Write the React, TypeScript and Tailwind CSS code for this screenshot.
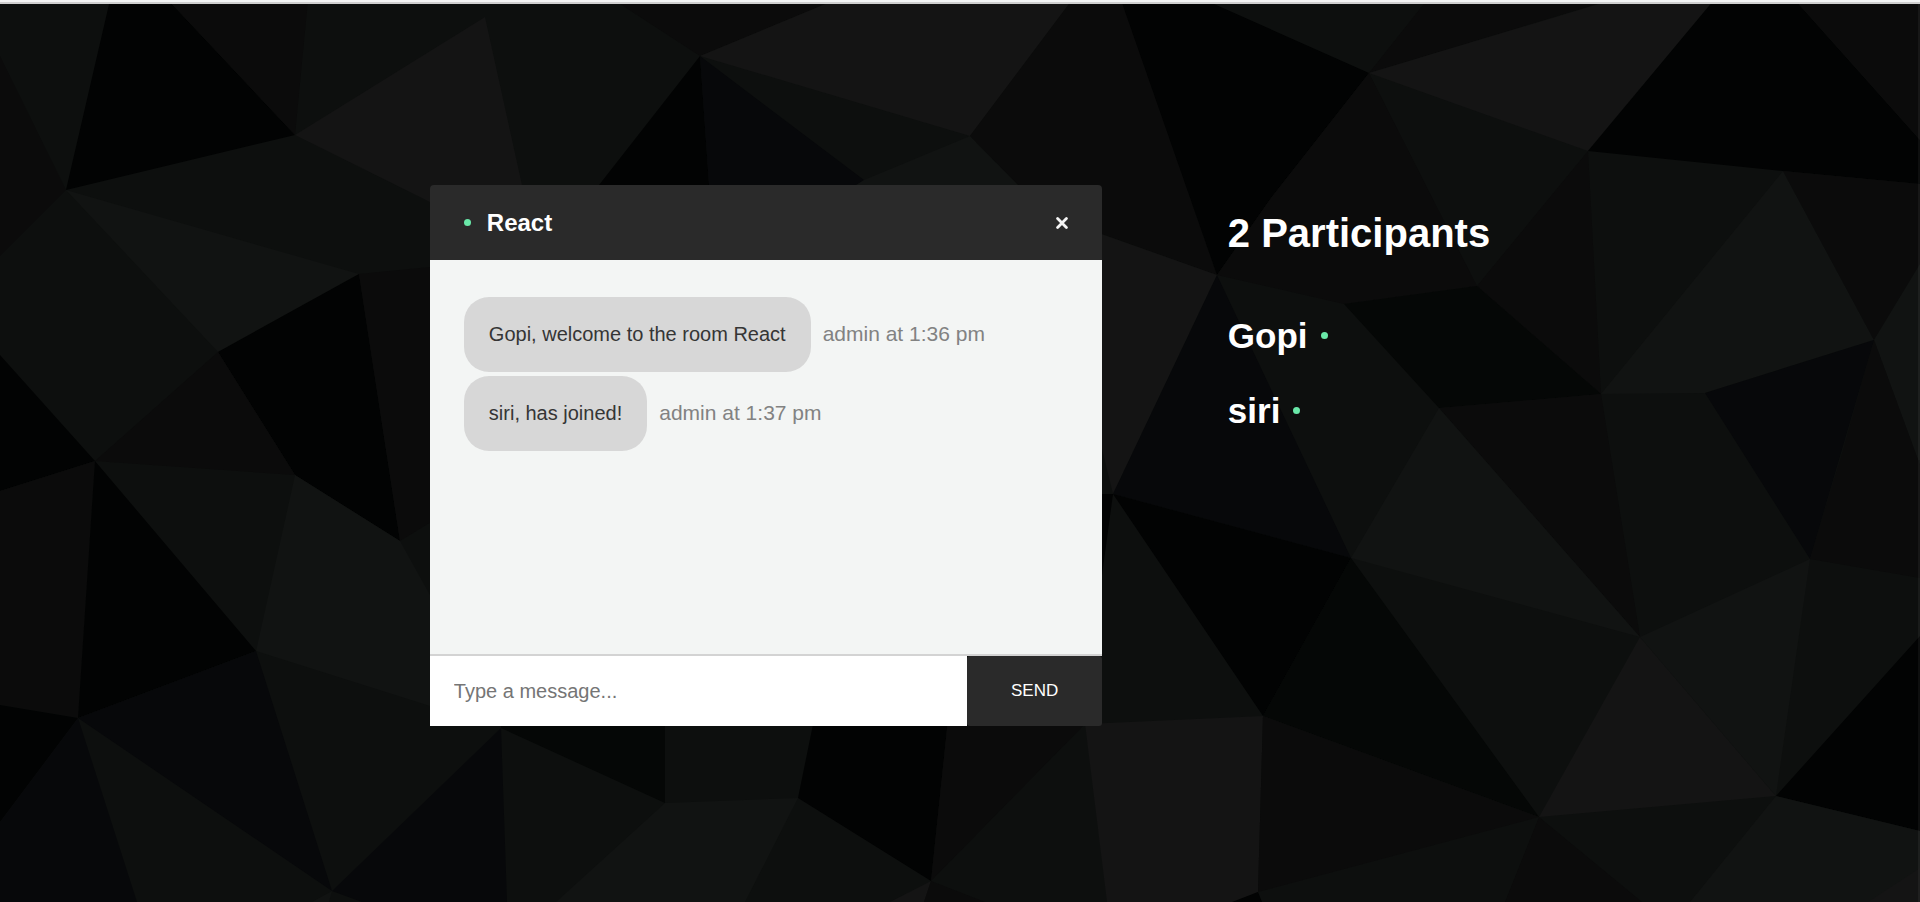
import { useState } from "react";

type Message = { text: string; meta: string };

const messages: Message[] = [
  { text: "Gopi, welcome to the room React", meta: "admin at 1:36 pm" },
  { text: "siri, has joined!", meta: "admin at 1:37 pm" },
];

const participants = ["Gopi", "siri"];

const shades = {
  moss: "#0d0f0e",
  slate: "#111312",
  coal: "#0b0b0b",
  black: "#020303",
  ink: "#050706",
  navy: "#07080a",
  ash: "#141414",
};

const facets: [keyof typeof shades, string][] = [
  ["coal", "0,56 66,190 0,256"],
  ["black", "110,0 168,0 295,135 66,190"],
  ["coal", "168,0 308,0 295,135"],
  ["ash", "295,135 485,17 522,185 522,260 430,202"],
  ["slate", "66,190 359,274 218,352"],
  ["black", "218,352 359,274 400,541 295,475"],
  ["coal", "359,274 430,267 500,480 400,541"],
  ["coal", "218,352 295,475 95,461"],
  ["black", "0,355 95,461 0,491"],
  ["coal", "0,491 95,461 78,718 0,705"],
  ["black", "95,461 256,651 78,718"],
  ["slate", "295,475 400,541 430,595 430,706 256,651"],
  ["black", "0,705 78,718 0,822"],
  ["navy", "78,718 0,822 0,902 137,902"],
  ["navy", "78,718 256,651 332,891"],
  ["navy", "332,891 501,728 507,902 362,902"],
  ["slate", "332,891 312,902 329,902"],
  ["ink", "501,728 501,700 665,700 665,803"],
  ["slate", "665,803 798,798 745,902 556,902"],
  ["black", "798,798 818,700 950,700 931,881"],
  ["coal", "950,700 1085,700 1085,724 931,881"],
  ["ash", "931,881 890,902 924,902"],
  ["coal", "931,881 924,902 985,902"],
  ["ash", "1085,724 1263,716 1258,892 1235,902 1107,902"],
  ["coal", "614,0 835,0 700,56"],
  ["ash", "700,56 835,0 1072,0 970,136"],
  ["black", "700,56 599,185 599,220 711,220 709,185"],
  ["navy", "700,56 864,180 864,220 709,220 709,185"],
  ["slate", "970,136 1028,195 840,195 864,180"],
  ["coal", "1072,0 1122,0 1217,275 1102,234 1028,195 970,136"],
  ["black", "1121,0 1205,0 1369,73 1271,198 1217,275"],
  ["coal", "1369,73 1477,286 1344,304 1217,275 1271,198"],
  ["coal", "1427,0 1610,0 1369,73"],
  ["ash", "1369,73 1602,3 1610,0 1714,0 1588,151"],
  ["black", "1714,0 1795,0 1920,140 1920,184 1783,171 1588,151"],
  ["coal", "1795,0 1920,0 1920,140"],
  ["coal", "1588,151 1601,394 1477,286"],
  ["slate", "1783,171 1874,340 1705,393 1601,394"],
  ["coal", "1783,171 1920,184 1920,264 1874,340"],
  ["slate", "1920,264 1874,340 1918,460 1920,460"],
  ["navy", "1874,340 1810,559 1705,393"],
  ["coal", "1874,340 1920,465 1920,578 1810,559 1843,450"],
  ["ink", "1344,304 1477,286 1601,394 1439,408"],
  ["coal", "1439,408 1601,394 1640,637"],
  ["slate", "1439,408 1640,637 1351,558"],
  ["ash", "1090,230 1217,275 1113,494 1090,400"],
  ["navy", "1217,275 1351,558 1113,494"],
  ["black", "1113,494 1351,558 1263,716"],
  ["black", "1090,494 1113,494 1100,590"],
  ["ink", "1351,558 1539,817 1263,716"],
  ["coal", "1263,716 1539,817 1258,892"],
  ["ash", "1640,637 1776,796 1539,817"],
  ["slate", "1640,637 1810,559 1776,796"],
  ["black", "1776,796 1920,636 1920,831"],
  ["slate", "1776,796 1920,831 1920,902 1690,902"],
  ["ash", "1920,868 1920,902 1868,902"],
  ["coal", "1539,817 1642,902 1505,902"],
  ["black", "1258,892 1262,902 1232,902"],
];

function Backdrop() {
  return (
    <svg
      aria-hidden="true"
      className="absolute inset-0 h-full w-full"
      viewBox="0 0 1920 902"
      preserveAspectRatio="xMidYMid slice"
    >
      <rect width="1920" height="902" fill={shades.moss} />
      {facets.map(([shade, points]) => (
        <polygon key={points} points={points} fill={shades[shade]} />
      ))}
      <rect x="1918" width="2" height="902" fill="#ffffff" fillOpacity="0.05" />
    </svg>
  );
}

function OnlineDot() {
  return <span className="size-[7px] shrink-0 rounded-full bg-[#69e8a8]" />;
}

export default function App() {
  const [draft, setDraft] = useState("");

  return (
    <div className="relative flex min-h-screen flex-col bg-[#0d0f0e] font-['Liberation_Sans',Arial,sans-serif]">
      <Backdrop />
      <div className="relative h-1 border-b-2 border-[#cfcfcf] bg-[#f3f4f4]" />
      <main className="relative flex flex-1 items-center justify-center gap-[126px] pt-[5px]">
        <section className="flex w-[35%] flex-col">
          <header className="flex h-[75px] items-center justify-between rounded-t bg-[#2a2a2a] px-[34px]">
            <div className="flex items-center gap-4">
              <OnlineDot />
              <h3 className="text-2xl leading-7 font-bold text-white">React</h3>
            </div>
            <a href="#leave" aria-label="Leave room" className="block">
              <svg className="size-3" viewBox="0 0 12 12" fill="none" stroke="#f4f4f4" strokeWidth="2.8" strokeLinecap="round">
                <path d="M1.6 1.6 10.4 10.4M10.4 1.6 1.6 10.4" />
              </svg>
            </a>
          </header>
          <div className="flex h-[394px] flex-col gap-1 overflow-auto bg-[#f3f5f4] px-[34px] pt-[37px]">
            {messages.map((message) => (
              <div key={message.text} className="flex items-baseline gap-3">
                <p className="rounded-[25px] bg-[#d7d7d7] px-[25px] py-6 text-xl leading-[27px] text-[#353535]">
                  {message.text}
                </p>
                <p className="text-[21px] leading-[27px] text-[#828282]">{message.meta}</p>
              </div>
            ))}
          </div>
          <form
            className="flex h-[72px] border-t-2 border-[#d3d3d3]"
            onSubmit={(event) => {
              event.preventDefault();
              setDraft("");
            }}
          >
            <input
              type="text"
              aria-label="Message"
              placeholder="Type a message..."
              value={draft}
              onChange={(event) => setDraft(event.target.value)}
              className="w-4/5 bg-white px-6 text-xl text-[#353535] outline-none placeholder:text-[#757575]"
            />
            <button type="submit" className="w-1/5 rounded-[3px] bg-[#2a2a2a] text-[17px] text-white">
              SEND
            </button>
          </form>
        </section>
        <aside className="flex flex-col justify-center self-stretch text-white">
          <div className="h-[541px] pt-[25px]">
            <h1 className="text-[40px] leading-[46px] font-bold">2 Participants</h1>
            <ul className="mt-[42px]">
              {participants.map((name) => (
                <li key={name} className="flex h-[75px] items-center gap-[13px] text-[35px] leading-10 font-bold">
                  {name}
                  <OnlineDot />
                </li>
              ))}
            </ul>
          </div>
        </aside>
      </main>
    </div>
  );
}
